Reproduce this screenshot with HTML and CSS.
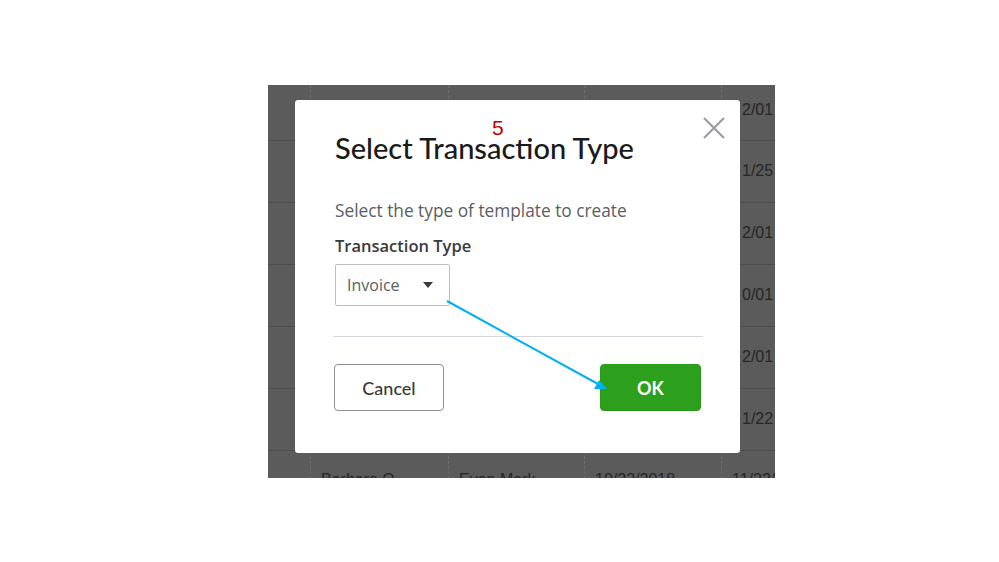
FILE: index.html
```html
<!DOCTYPE html>
<html lang="en">
	<head>
		<meta charset="UTF-8" />
		<title>Select Transaction Type</title>
		<link rel="stylesheet" href="styles.css">
	</head>
	<body>
		<div class="slide">
			<div class="shot">
				<div class="sheet">
					<div class="row first"><div></div><div></div><div></div><div></div><div class="date">2/01</div></div>
					<div class="row"><div></div><div></div><div></div><div></div><div class="date">1/25</div></div>
					<div class="row"><div></div><div></div><div></div><div></div><div class="date">2/01</div></div>
					<div class="row"><div></div><div></div><div></div><div></div><div class="date">0/01</div></div>
					<div class="row"><div></div><div></div><div></div><div></div><div class="date">2/01</div></div>
					<div class="row"><div></div><div></div><div></div><div></div><div class="date">1/22</div></div>
					<div class="row last"><div></div><div>Barbara O...</div><div>Evan Mark...</div><div>10/22/2018</div><div>11/22/</div></div>
				</div>

				<div class="modal">
					<svg class="close" width="24" height="24" viewBox="0 0 24 24">
						<path d="M2 2 L22 22 M22 2 L2 22" />
					</svg>
					<h2 class="title">Select Transaction Type</h2>
					<p class="hint">Select the type of template to create</p>
					<label class="field-label">Transaction Type</label>
					<div class="select">
						<span>Invoice</span>
						<svg class="caret" width="10" height="6" viewBox="0 0 10 6"><path d="M0 0 H10 L5 6 Z" /></svg>
					</div>
					<hr class="divider" />
					<div class="actions">
						<button class="btn cancel">Cancel</button>
						<button class="btn ok">OK</button>
					</div>
				</div>
			</div>
		</div>

		<!-- slide annotations -->
		<span class="step">5</span>
		<svg class="arrow" width="999" height="562" viewBox="0 0 999 562">
			<line x1="447" y1="301" x2="598" y2="384" />
			<path d="M607 389 L594 389 L599 380 Z" />
		</svg>
	</body>
</html>
```

FILE: styles.css
```css
body {
	margin: 0;
	background: #fff;
	font-family: 'Open Sans', Lato, sans-serif;
	color: #393a3d;
}

.slide {
	width: 999px;
	height: 562px;
	padding: 85px 0 0 268px;
	box-sizing: border-box;
}

.shot {
	position: relative;
	width: 507px;
	height: 393px;
	background: #5b5b5b;
	overflow: hidden;
}

.sheet {
	display: flex;
	flex-direction: column;
}

.row {
	display: grid;
	grid-template-columns: 43px 138px 136px 137px 80px;
	height: 62px;
	border-bottom: 1px solid #4c4c4c;
	box-sizing: border-box;
}

.row.first {
	height: 56px;
}

.row.last {
	border-bottom: 0;
}

.row > div {
	border-right: 1px dashed #6e6e6e;
	font-family: 'Liberation Sans', Arial, sans-serif;
	font-size: 16px;
	color: #262626;
	padding: 21px 0 0 10px;
	white-space: nowrap;
	overflow: hidden;
}

.row > div.date {
	border-right: 0;
	padding-left: 20px;
}

.row.first > div.date {
	padding-top: 16px;
}

.row.last > div {
	padding-top: 20px;
}

.modal {
	position: absolute;
	left: 27px;
	top: 15px;
	width: 445px;
	height: 353px;
	box-sizing: border-box;
	padding: 29px 39px 0 40px;
	background: #fff;
	border-radius: 3px;
	display: flex;
	flex-direction: column;
	align-items: flex-start;
}

.close {
	position: absolute;
	right: 14px;
	top: 16px;
	stroke: #9a9da2;
	stroke-width: 2.2;
	fill: none;
}

.title {
	margin: 0;
	font-family: Lato, 'Open Sans', sans-serif;
	font-size: 29px;
	line-height: 38px;
	font-weight: 500;
	color: #1a1a1a;
}

.hint {
	margin: 32px 0 0;
	font-size: 17.3px;
	line-height: 23px;
	color: #5b5e63;
}

.field-label {
	margin-top: 13px;
	font-size: 16.5px;
	line-height: 22px;
	font-weight: 600;
	color: #393a3d;
}

.select {
	margin-top: 7px;
	width: 115px;
	height: 42px;
	box-sizing: border-box;
	border: 1px solid #babec5;
	border-radius: 2px;
	padding: 0 16px 0 11px;
	display: flex;
	align-items: center;
	justify-content: space-between;
	font-size: 16px;
	color: #5b5e63;
}

.caret {
	fill: #393a3d;
}

.divider {
	align-self: stretch;
	margin: 30px -2px 0;
	border: 0;
	border-top: 1.5px solid #d4d7dc;
}

.actions {
	align-self: stretch;
	margin-top: 27px;
	display: flex;
	justify-content: space-between;
}

.btn {
	height: 47px;
	border-radius: 4px;
	font-family: Lato, 'Open Sans', sans-serif;
	font-size: 18px;
	cursor: pointer;
}

.cancel {
	width: 110px;
	margin-left: -1px;
	background: #fff;
	border: 1.5px solid #8d9096;
	color: #393a3d;
	font-weight: 500;
}

.ok {
	width: 101px;
	background: #2ca01c;
	border: 1px solid #2a9a1b;
	color: #fff;
	font-weight: 700;
}

.step {
	position: absolute;
	left: 492px;
	top: 116px;
	font-family: 'Liberation Sans', Calibri, sans-serif;
	font-size: 21px;
	color: #c00000;
}

.arrow {
	position: absolute;
	left: 0;
	top: 0;
	pointer-events: none;
}

.arrow line {
	stroke: #00b0f0;
	stroke-width: 2;
}

.arrow path {
	fill: #00b0f0;
}
```
